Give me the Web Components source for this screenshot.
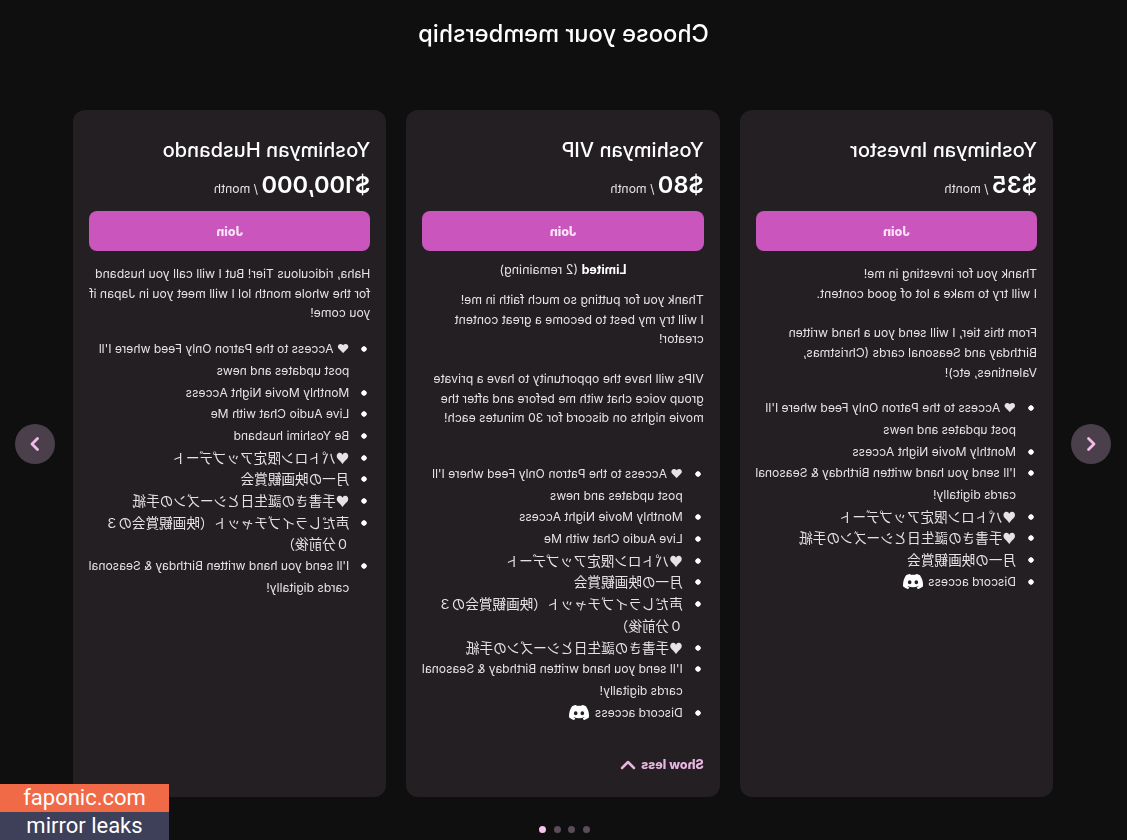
<!DOCTYPE html>
<html lang="en">
<head>
<meta charset="utf-8">
<title>Choose your membership</title>
<style>
    html, body
    {
        margin: 0;
        height: 840px;
        overflow: hidden;
        background: #0f0f10;
        color: #fff;
        font-family: "Inter", "Noto Sans CJK JP", sans-serif;
    }

    li
    {
        list-style: none;
        padding-left: 21px;
        background: radial-gradient(circle at 3px 3px, #fff 2.400px, transparent 3px) no-repeat 3px 8px / 6px 6px;
    }

    .jp { font-size: 13.6px; font-family: "Noto Sans CJK JP", sans-serif; }
</style>
</head>
<body>
<membership-page>
    <tier-card name="Yoshimyan Investor" price="$35">
        <p>Thank you for investing in me!<br>I will try to make a lot of good content.<br><br>From this tier, I will send you a hand written Birthday and Seasonal cards (Christmas, Valentines, etc)!</p>
        <ul>
            <li>♥ Access to the Patron Only Feed where I'll post updates and news</li>
            <li>Monthly Movie Night Access</li>
            <li>I'll send you hand written Birthday &amp; Seasonal cards digitally!</li>
            <li class="jp">♥パトロン限定アップデート</li>
            <li class="jp">♥手書きの誕生日とシーズンの手紙</li>
            <li class="jp">月一の映画観賞会</li>
            <li>Discord access <discord-icon></discord-icon></li>
        </ul>
    </tier-card>
    <tier-card name="Yoshimyan VIP" price="$80" limited="(2 remaining)" expanded>
        <p class="wide">Thank you for putting so much faith in me!<br>I will try my best to become a great content creator!<br><br>VIPs will have the opportunity to have a private group voice chat with me before and after the movie nights on discord for 30 minutes each!</p>
        <ul>
            <li>♥ Access to the Patron Only Feed where I'll post updates and news</li>
            <li>Monthly Movie Night Access</li>
            <li>Live Audio Chat with Me</li>
            <li class="jp">♥パトロン限定アップデート</li>
            <li class="jp">月一の映画観賞会</li>
            <li class="jp">声だしライブチャット（映画観賞会の３<br>０分前後）</li>
            <li class="jp">♥手書きの誕生日とシーズンの手紙</li>
            <li>I'll send you hand written Birthday &amp; Seasonal cards digitally!</li>
            <li>Discord access <discord-icon></discord-icon></li>
        </ul>
    </tier-card>
    <tier-card name="Yoshimyan Husbando" price="$100,000">
        <p>Haha, ridiculous Tier! But I will call you husband for the whole month lol I will meet you in Japan if you come!</p>
        <ul>
            <li>♥ Access to the Patron Only Feed where I'll post updates and news</li>
            <li>Monthly Movie Night Access</li>
            <li>Live Audio Chat with Me</li>
            <li>Be Yoshimi husband</li>
            <li class="jp">♥パトロン限定アップデート</li>
            <li class="jp">月一の映画観賞会</li>
            <li class="jp">♥手書きの誕生日とシーズンの手紙</li>
            <li class="jp">声だしライブチャット（映画観賞会の３<br>０分前後）</li>
            <li>I'll send you hand written Birthday &amp; Seasonal cards digitally!</li>
        </ul>
    </tier-card>
</membership-page>
<mirror-badge></mirror-badge>

<script>
const pageTemplate = document.createElement('template');
pageTemplate.innerHTML = `
    <style>
        :host
        {
            display: block;
            position: relative;
            height: 840px;
            transform: scaleX(-1);
            font-family: "Inter", "Noto Sans CJK JP", sans-serif;
        }

        h2
        {
            margin: 0;
            padding-top: 19px;
            height: 110px;
            box-sizing: border-box;
            text-align: center;
            font-size: 23.6px;
            line-height: 30px;
            font-weight: 500;
        }

        .cards
        {
            display: grid;
            grid-template-columns: repeat(3, 1fr);
            gap: 20px;
            height: 687px;
            padding: 0 73px 0 74px;
        }

        .arrow
        {
            position: absolute;
            top: 424px;
            width: 40px;
            height: 40px;
            border-radius: 50%;
            background: #4b3f4b;
            display: flex;
            align-items: center;
            justify-content: center;
        }

        .arrow svg { width: 20px; height: 20px; fill: none; stroke: #f3bdea; stroke-width: 2.8; stroke-linecap: round; stroke-linejoin: round; }
        .prev { left: 16px; }
        .next { right: 15px; }

        .dots
        {
            display: flex;
            gap: 7.600px;
            justify-content: center;
            padding-top: 29px;
            transform: translateX(-1px);
        }

        .dots i
        {
            width: 7px;
            height: 7px;
            border-radius: 50%;
            background: #5b4c59;
        }

        .dots i.on { background: #f8c3ef; }
    </style>
    <h2>Choose your membership</h2>
    <div class="cards"><slot></slot></div>
    <div class="arrow prev"><svg viewBox="0 0 20 20"><path d="M12.500 4.500 7 10l5.500 5.500"/></svg></div>
    <div class="arrow next"><svg viewBox="0 0 20 20"><path d="M7.500 4.500 13 10l-5.500 5.500"/></svg></div>
    <div class="dots"><i></i><i></i><i></i><i class="on"></i></div>
`;

class MembershipPage extends HTMLElement
{
    constructor()
    {
        super();
        this.attachShadow({ mode: 'open' });
        this.shadowRoot.append(pageTemplate.content.cloneNode(true));
    }
}

const cardTemplate = document.createElement('template');
cardTemplate.innerHTML = `
    <style>
        :host
        {
            display: flex;
            flex-direction: column;
            box-sizing: border-box;
            padding: 28px 16px 24px;
            background: #231f22;
            border-radius: 12px;
            min-width: 0;
            color: #e6e3e5;
            font-size: 12.2px;
        }

        h3
        {
            margin: 0;
            color: #fff;
            font-size: 20px;
            line-height: 24px;
            font-weight: 500;
        }

        .price
        {
            margin-top: 10px;
            font-size: 12.2px;
            line-height: 26px;
        }

        .price b
        {
            color: #fff;
            font-size: 23.5px;
            font-weight: 600;
        }

        button
        {
            display: block;
            width: 100%;
            height: 40px;
            margin-top: 9px;
            border: 0;
            border-radius: 8px;
            background: #c955bd;
            color: #fbe3f7;
            font: inherit;
            font-size: 12.500px;
            font-weight: 800;
        }

        .limited
        {
            margin: 9px 0 -3px;
            text-align: center;
            font-size: 12.500px;
            line-height: 20px;
        }

        .limited b { color: #fff; }
        .limited[hidden] { display: none; }

        .less
        {
            margin-top: auto;
            display: flex;
            align-items: center;
            gap: 5px;
            color: #eab4e2;
            font-size: 12.500px;
            font-weight: 800;
            line-height: 16px;
        }

        .less[hidden] { display: none; }
        .less svg { width: 16px; height: 10px; fill: none; stroke: currentColor; stroke-width: 2.5; stroke-linecap: round; stroke-linejoin: round; }

        ::slotted(p)
        {
            margin: 13px 0 15px;
            line-height: 19.7px;
        }

        ::slotted(p.wide) { margin-bottom: 35px; }

        ::slotted(ul)
        {
            margin: 0 -2px 0 0;
            padding: 0;
            font-size: 12.1px;
            line-height: 21.7px;
        }
    </style>
    <h3></h3>
    <div class="price"><b></b> / month</div>
    <button>Join</button>
    <div class="limited" hidden><b>Limited</b> <span></span></div>
    <slot></slot>
    <div class="less" hidden>Show less <svg viewBox="0 0 16 10"><path d="M2 8l6-6 6 6"/></svg></div>
`;

class TierCard extends HTMLElement
{
    constructor()
    {
        super();
        this.attachShadow({ mode: 'open' });
        this.shadowRoot.append(cardTemplate.content.cloneNode(true));
    }

    connectedCallback()
    {
        this.shadowRoot.querySelector('h3').textContent = this.getAttribute('name');
        this.shadowRoot.querySelector('.price b').textContent = this.getAttribute('price');

        if (this.hasAttribute('limited'))
        {
            const limited = this.shadowRoot.querySelector('.limited');
            limited.hidden = false;
            limited.querySelector('span').textContent = this.getAttribute('limited');
        }

        this.shadowRoot.querySelector('.less').hidden = !this.hasAttribute('expanded');
    }
}

class DiscordIcon extends HTMLElement
{
    constructor()
    {
        super();
        this.attachShadow({ mode: 'open' }).innerHTML = `
            <style>
                :host { display: inline-block; width: 20px; height: 15px; vertical-align: -3px; margin-left: 2px; line-height: 0; }
                svg { display: block; width: 100%; height: 100%; fill: #fff; }
            </style>
            <svg viewBox="0 3 24 18"><path d="M20.317 4.3698a19.7913 19.7913 0 00-4.8851-1.5152.0741.0741 0 00-.0785.0371c-.211.3753-.4447.8648-.6083 1.2495-1.8447-.2762-3.68-.2762-5.4868 0-.1636-.3933-.4058-.8742-.6177-1.2495a.077.077 0 00-.0785-.037 19.7363 19.7363 0 00-4.8852 1.515.0699.0699 0 00-.0321.0277C.5334 9.0458-.319 13.5799.0992 18.0578a.0824.0824 0 00.0312.0561c2.0528 1.5076 4.0413 2.4228 5.9929 3.0294a.0777.0777 0 00.0842-.0276c.4616-.6304.8731-1.2952 1.226-1.9942a.076.076 0 00-.0416-.1057c-.6528-.2476-1.2743-.5495-1.8722-.8923a.077.077 0 01-.0076-.1277c.1258-.0943.2517-.1923.3718-.2914a.0743.0743 0 01.0776-.0105c3.9278 1.7933 8.18 1.7933 12.0614 0a.0739.0739 0 01.0785.0095c.1202.099.246.1981.3728.2924a.077.077 0 01-.0066.1276 12.2986 12.2986 0 01-1.873.8914.0766.0766 0 00-.0407.1067c.3604.698.7719 1.3628 1.225 1.9932a.076.076 0 00.0842.0286c1.961-.6067 3.9495-1.5219 6.0023-3.0294a.077.077 0 00.0313-.0552c.5004-5.177-.8382-9.6739-3.5485-13.6604a.061.061 0 00-.0312-.0286zM8.02 15.3312c-1.1825 0-2.1569-1.0857-2.1569-2.419 0-1.3332.9555-2.4189 2.157-2.4189 1.2108 0 2.1757 1.0952 2.1568 2.419 0 1.3332-.9555 2.4189-2.1569 2.4189zm7.9748 0c-1.1825 0-2.1569-1.0857-2.1569-2.419 0-1.3332.9554-2.4189 2.1569-2.4189 1.2108 0 2.1757 1.0952 2.1568 2.419 0 1.3332-.946 2.4189-2.1568 2.4189Z"/></svg>
        `;
    }
}

class MirrorBadge extends HTMLElement
{
    constructor()
    {
        super();
        this.attachShadow({ mode: 'open' }).innerHTML = `
            <style>
                :host
                {
                    position: absolute;
                    left: 0;
                    bottom: 0;
                    width: 169px;
                    display: block;
                    font: 400 22px/28px Roboto, sans-serif;
                    color: #fff;
                    text-align: center;
                }

                div { height: 28px; }
                .top { background: #f06a47; }
                .bottom { background: #3e4059; }
            </style>
            <div class="top">faponic.com</div>
            <div class="bottom">mirror leaks</div>
        `;
    }
}

customElements.define('membership-page', MembershipPage);
customElements.define('tier-card', TierCard);
customElements.define('discord-icon', DiscordIcon);
customElements.define('mirror-badge', MirrorBadge);
</script>
</body>
</html>
